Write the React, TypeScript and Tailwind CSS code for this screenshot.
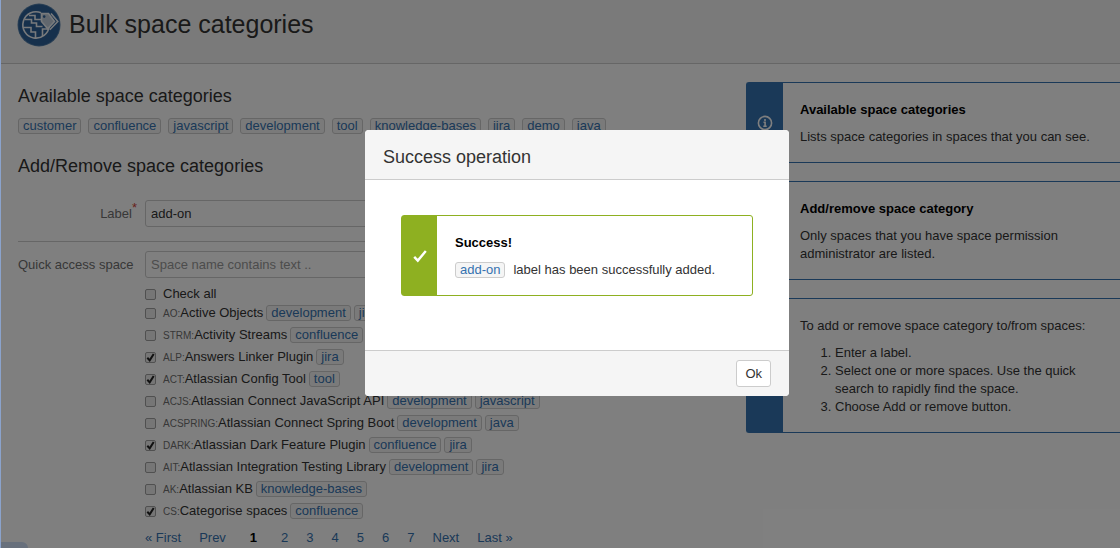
import React, { useState } from 'react';

type Space = {
  id: string;
  name: string;
  tags: string[];
};

const categories = ['customer', 'confluence', 'javascript', 'development', 'tool', 'knowledge-bases', 'jira', 'demo', 'java'];

const spaces: Space[] = [
  { id: 'AO', name: 'Active Objects', tags: ['development', 'jira'] },
  { id: 'STRM', name: 'Activity Streams', tags: ['confluence', 'jira'] },
  { id: 'ALP', name: 'Answers Linker Plugin', tags: ['jira'] },
  { id: 'ACT', name: 'Atlassian Config Tool', tags: ['tool'] },
  { id: 'ACJS', name: 'Atlassian Connect JavaScript API', tags: ['development', 'javascript'] },
  { id: 'ACSPRING', name: 'Atlassian Connect Spring Boot', tags: ['development', 'java'] },
  { id: 'DARK', name: 'Atlassian Dark Feature Plugin', tags: ['confluence', 'jira'] },
  { id: 'AIT', name: 'Atlassian Integration Testing Library', tags: ['development', 'jira'] },
  { id: 'AK', name: 'Atlassian KB', tags: ['knowledge-bases'] },
  { id: 'CS', name: 'Categorise spaces', tags: ['confluence'] },
];

const Tag = ({ name }: { name: string }) => (
  <a
    href="#"
    className="inline-flex h-4 items-center rounded-[3px] border border-[#ccc] bg-[#f5f5f5] px-1 text-[#3572b0]"
  >
    {name}
  </a>
);

const Logo = () => (
  <svg className="h-11 w-11 shrink-0" viewBox="0 0 44 44" fill="none">
    <circle cx="22" cy="22" r="21.5" fill="#5580ab" />
    <circle cx="22" cy="22" r="20.6" fill="#2d6199" />
    <g stroke="#f0f4f8" strokeWidth="1.6">
      <path d="M24 9.7A13.2 13.2 0 1 0 32.2 23" />
      <path d="M8 16.5h6.5v3.5h5v3.5h6" />
      <path d="M6 24.5h8v4.5h4.5V35" />
      <path d="M12 12.5h6v4h7M25.5 33v-7h6" />
      <path d="M34 10.5l6.8 8-8 8.2" />
      <path d="M24.5 10.5h7l6 8-6.8 7.3-6.2-7.3z" fill="#c3cfdc" />
    </g>
    <circle cx="27.2" cy="13.6" r="1.3" fill="#2d6199" />
  </svg>
);

const Checkbox = ({ id, checked, onChange }: { id: string; checked: boolean; onChange: () => void }) => (
  <span className="relative mr-[7px] h-[11px] w-[11px] shrink-0">
    <input
      id={id}
      type="checkbox"
      checked={checked}
      onChange={onChange}
      className="block h-[11px] w-[11px] appearance-none rounded-[2px] border border-[#a0a0a0] bg-[#ececec]"
    />
    {checked && (
      <svg className="pointer-events-none absolute inset-0" viewBox="0 0 11 11" fill="none">
        <path d="M2.3 5.8l2.4 2.6 4-6.4" stroke="#222" strokeWidth="2" />
      </svg>
    )}
  </span>
);

const InfoPanel = ({ children }: { children: React.ReactNode }) => (
  <div className="flex rounded-l-[3px] border border-r-0 border-[#3572b0]">
    <div className="flex w-9 shrink-0 items-center justify-center bg-[#3572b0]">
      <svg className="h-4 w-4" viewBox="0 0 16 16" fill="none">
        <circle cx="8" cy="8" r="6.6" stroke="#fff" strokeWidth="1.6" />
        <path d="M8 4v2M6.5 7.3h1.6V11M6.3 11.3h3.4" stroke="#fff" strokeWidth="1.6" />
      </svg>
    </div>
    <div className="flex flex-col gap-[9px] px-[17px] pt-[18px] pb-4">{children}</div>
  </div>
);

const App = () => {
  const [label, setLabel] = useState<string>('add-on');
  const [query, setQuery] = useState<string>('');
  const [selected, setSelected] = useState<string[]>(['ALP', 'ACT', 'DARK', 'CS']);
  const [isOpen, setIsOpen] = useState<boolean>(true);

  const toggle = (id: string) =>
    setSelected(selected.includes(id) ? selected.filter((s) => s !== id) : [...selected, id]);

  const allChecked = selected.length === spaces.length;

  return (
    <div className="relative min-h-screen overflow-hidden bg-white font-['Liberation_Sans',Arial,sans-serif] text-[13px] leading-[18px] text-[#333]">
      {/* Header */}
      <header className="flex h-16 items-start gap-2 border-b border-[#ccc] bg-[#f5f5f5] pt-[3px] pl-[17px]">
        <Logo />
        <h1 className="text-[25px] leading-[42px]">Bulk space categories</h1>
      </header>

      <div className="flex gap-[27px] pt-[18px] pl-[18px]">
        <main className="min-w-0 flex-1">
          <h2 className="text-[18px] leading-[28px]">Available space categories</h2>
          <div className="mt-2 flex gap-[7px]">
            {categories.map((name) => (
              <Tag key={name} name={name} />
            ))}
          </div>

          <h2 className="mt-[18px] text-[18px] leading-[28px]">Add/Remove space categories</h2>

          {/* Label */}
          <div className="mt-5 flex border-b border-[#ccc] pb-[14px]">
            <label htmlFor="label" className="w-[127px] shrink-0 pt-[5px] pr-2 text-right text-[#707070]">
              Label<sup className="text-[13px] text-[#d04437]">*</sup>
            </label>
            <input
              id="label"
              type="text"
              className="h-[27px] w-[300px] rounded-[3px] border border-[#ccc] bg-white px-[5px]"
              value={label}
              onChange={(e) => setLabel(e.target.value)}
            />
          </div>

          {/* Quick search */}
          <div className="mt-[9px] flex">
            <label htmlFor="quick" className="w-[127px] shrink-0 pt-[5px] pr-3 text-right whitespace-nowrap text-[#707070]">
              Quick access space
            </label>
            <input
              id="quick"
              type="text"
              className="h-[27px] w-[300px] rounded-[3px] border border-[#ccc] bg-white px-[5px] placeholder:text-[#999]"
              placeholder="Space name contains text .."
              value={query}
              onChange={(e) => setQuery(e.target.value)}
            />
          </div>

          {/* Spaces */}
          <div className="mt-2 pl-[127px]">
            <div className="flex h-4 items-center">
              <Checkbox
                id="all"
                checked={allChecked}
                onChange={() => setSelected(allChecked ? [] : spaces.map((s) => s.id))}
              />
              <label htmlFor="all">Check all</label>
            </div>
            {spaces.map((space) => (
              <div key={space.id} className="flex h-[22px] items-center gap-[3px] whitespace-nowrap">
                <div className="flex items-center">
                  <Checkbox id={space.id} checked={selected.includes(space.id)} onChange={() => toggle(space.id)} />
                  <label htmlFor={space.id}>
                    <span className="text-[10px] text-[#707070]">{space.id}:</span>
                    {space.name}
                  </label>
                </div>
                {space.tags.map((name) => (
                  <Tag key={name} name={name} />
                ))}
              </div>
            ))}
          </div>

          {/* Pagination */}
          <nav className="mt-[7px] flex gap-[18px] pl-[127px] text-[#3572b0]">
            <a href="#">« First</a>
            <a href="#">Prev</a>
            <span className="px-[6px] font-bold text-black">1</span>
            {[2, 3, 4, 5, 6, 7].map((page) => (
              <a key={page} href="#">{page}</a>
            ))}
            <a href="#">Next</a>
            <a href="#">Last »</a>
          </nav>
        </main>

        <aside className="flex w-[374px] shrink-0 flex-col gap-[18px]">
          <InfoPanel>
            <h3 className="font-bold text-black">Available space categories</h3>
            <p>Lists space categories in spaces that you can see.</p>
          </InfoPanel>
          <InfoPanel>
            <h3 className="font-bold text-black">Add/remove space category</h3>
            <p>Only spaces that you have space permission administrator are listed.</p>
          </InfoPanel>
          <InfoPanel>
            <p>To add or remove space category to/from spaces:</p>
            <ol className="list-decimal pl-[35px]">
              <li>Enter a label.</li>
              <li>Select one or more spaces. Use the quick search to rapidly find the space.</li>
              <li>Choose Add or remove button.</li>
            </ol>
          </InfoPanel>
        </aside>
      </div>

      {/* Link status bubble */}
      <div className="absolute bottom-0 left-0 h-[6px] w-7 rounded-tr-full bg-[#d0e0f8]" />

      {/* Dialog */}
      {isOpen && (
        <>
          <div className="absolute inset-0 bg-black/50" />
          <div
            role="dialog"
            aria-labelledby="dialog-title"
            className="absolute top-[130px] left-[365px] w-[424px] overflow-hidden rounded-[4px] bg-white"
          >
            <h2 id="dialog-title" className="border-b border-[#ccc] bg-[#f5f5f5] px-[18px] pt-4 pb-[10px] text-[18px] leading-[23px]">
              Success operation
            </h2>
            <div className="px-9 pt-[35px] pb-[54px]">
              <div className="flex rounded-[3px] border border-[#8eb021]">
                <div className="flex w-[35px] shrink-0 items-center justify-center bg-[#8eb021]">
                  <svg className="h-[14px] w-[14px]" viewBox="0 0 14 14" fill="none">
                    <path d="M1.2 7.8l3.6 3.8 8-9.6" stroke="#fff" strokeWidth="2.4" />
                  </svg>
                </div>
                <div className="flex flex-col gap-[9px] px-[18px] pt-[18px] pb-4">
                  <h3 className="font-bold text-black">Success!</h3>
                  <p className="flex items-center gap-2">
                    <Tag name="add-on" /> label has been successfully added.
                  </p>
                </div>
              </div>
            </div>
            <div className="flex justify-end border-t border-[#ccc] bg-[#f5f5f5] px-[18px] py-[9px]">
              <button
                className="h-[27px] rounded-[3px] border border-[#ccc] bg-white px-2"
                onClick={() => setIsOpen(false)}
              >
                Ok
              </button>
            </div>
          </div>
        </>
      )}
      <div className="absolute inset-y-0 left-0 w-px bg-[#8ba3cc]" />
    </div>
  );
};

export default App;
